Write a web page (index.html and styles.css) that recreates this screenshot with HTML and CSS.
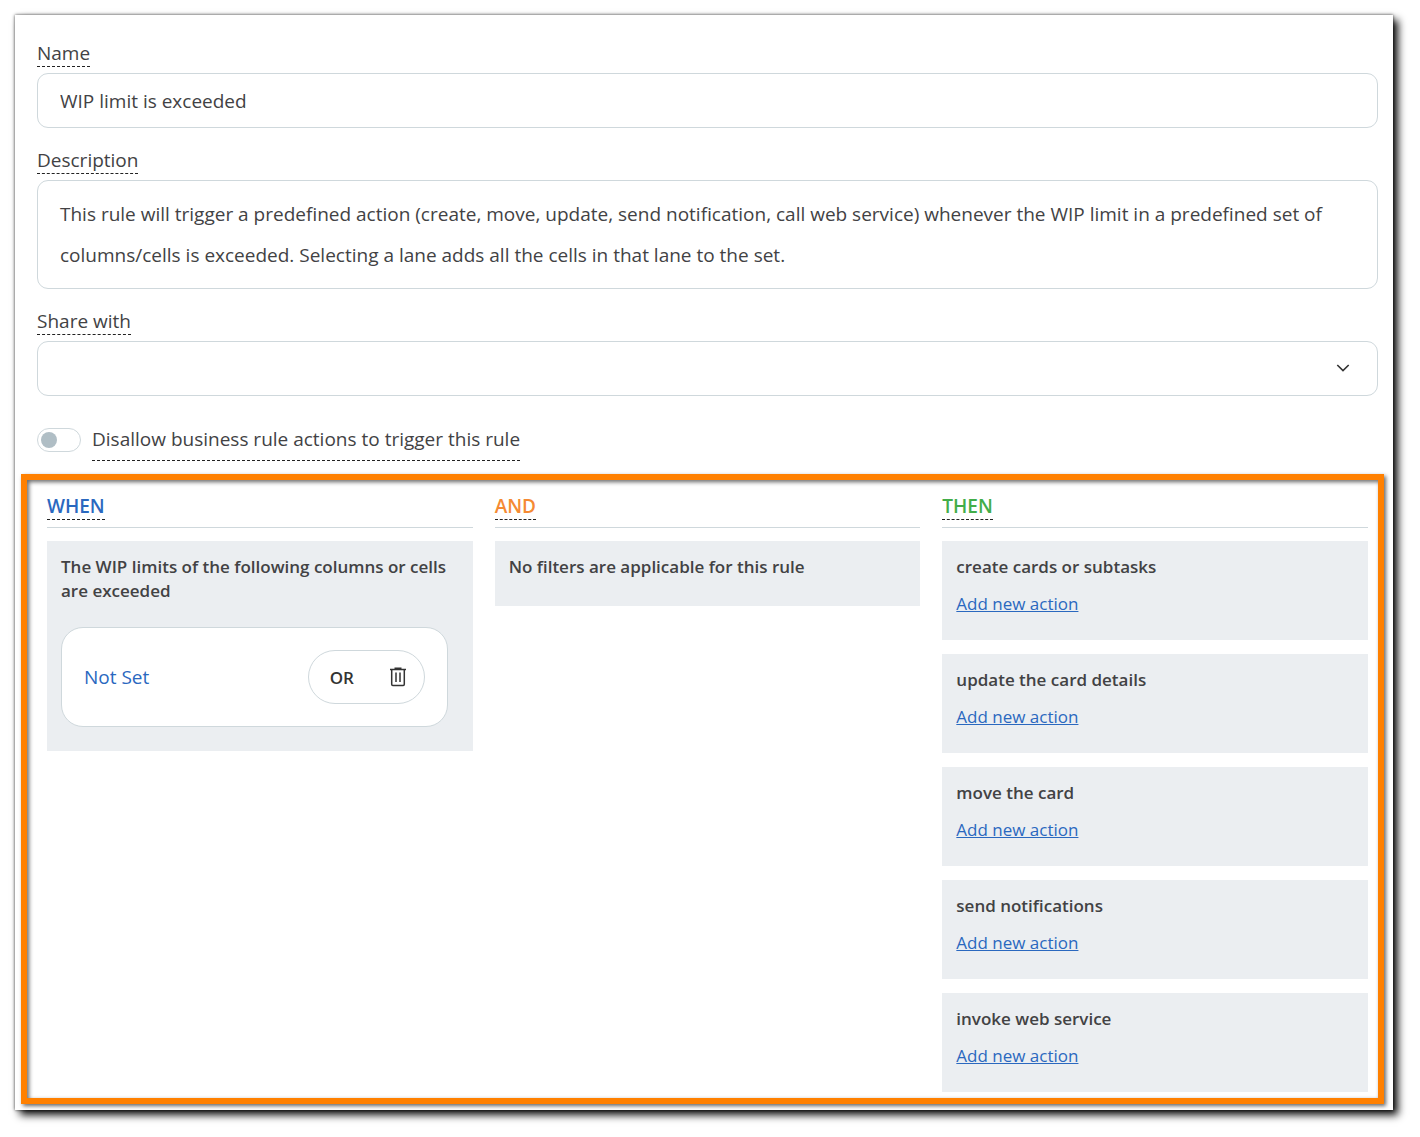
FILE: index.html
```html
<!DOCTYPE html>
<html lang="en">
<head>
<meta charset="utf-8">
<title>Business rule</title>
<link rel="stylesheet" href="styles.css">
</head>
<body>
<main class="panel">
  <form class="form">
    <div class="field">
      <label class="label" for="name">Name</label>
      <input class="control" id="name" type="text" value="WIP limit is exceeded">
    </div>
    <div class="field">
      <label class="label" for="description">Description</label>
      <textarea class="control control-area" id="description" rows="2">This rule will trigger a predefined action (create, move, update, send notification, call web service) whenever the WIP limit in a predefined set of columns/cells is exceeded. Selecting a lane adds all the cells in that lane to the set.</textarea>
    </div>
    <div class="field">
      <label class="label" for="share">Share with</label>
      <div class="select-wrap">
        <select class="control" id="share"><option></option></select>
        <svg class="chevron" width="14" height="8" viewBox="0 0 14 8" aria-hidden="true"><path d="M1.3 1 7 6.6 12.7 1" fill="none" stroke="currentColor" stroke-width="1.6"/></svg>
      </div>
    </div>
    <div class="toggle-row">
      <input class="toggle" id="disallow" type="checkbox">
      <label class="toggle-label" for="disallow">Disallow business rule actions to trigger this rule</label>
    </div>
  </form>
  <section class="rule">
    <div class="column">
      <div class="column-head"><h2 class="column-title when">WHEN</h2></div>
      <div class="block">
        <h3 class="block-title">The WIP limits of the following columns or cells are exceeded</h3>
        <div class="condition">
          <a class="condition-link" href="#">Not Set</a>
          <div class="pill">
            <button class="or" type="button">OR</button>
            <button class="trash" type="button" aria-label="Delete">
              <svg width="18" height="20" viewBox="0 0 18 20" fill="none" stroke="currentColor" stroke-width="1.5" aria-hidden="true"><path d="M1 2.5H17M5.5 1.2H12.5M2.7 2.5V17.3Q2.7 18.4 3.8 18.4H14.2Q15.3 18.4 15.3 17.3V2.5M7 5.5V15M11 5.5V15"/></svg>
            </button>
          </div>
        </div>
      </div>
    </div>
    <div class="column">
      <div class="column-head"><h2 class="column-title and">AND</h2></div>
      <div class="block"><h3 class="block-title">No filters are applicable for this rule</h3></div>
    </div>
    <div class="column">
      <div class="column-head"><h2 class="column-title then">THEN</h2></div>
      <div class="block"><h3 class="block-title">create cards or subtasks</h3><a class="action" href="#">Add new action</a></div>
      <div class="block"><h3 class="block-title">update the card details</h3><a class="action" href="#">Add new action</a></div>
      <div class="block"><h3 class="block-title">move the card</h3><a class="action" href="#">Add new action</a></div>
      <div class="block"><h3 class="block-title">send notifications</h3><a class="action" href="#">Add new action</a></div>
      <div class="block"><h3 class="block-title">invoke web service</h3><a class="action" href="#">Add new action</a></div>
    </div>
  </section>
</main>
</body>
</html>
```

FILE: styles.css
```css
* {
  box-sizing: border-box;
}

body {
  margin: 0;
  padding: 15px 27px 27px 15px;
  background: #fff;
  color: #424244;
  font-family: "Open Sans", "Noto Sans", sans-serif;
  font-size: 19px;
}

.panel {
  padding: 26px 9px 6px 6px;
  background: #fff;
  box-shadow: 0 0 3px rgba(0, 0, 0, 0.7), 5px 5px 8px rgba(0, 0, 0, 0.95);
}

.form {
  padding: 0 6px 0 16px;
}

.field {
  display: flex;
  flex-direction: column;
  align-items: flex-start;
  gap: 6px;
  margin-bottom: 20px;
}

.label {
  border-bottom: 1px dashed #222;
  line-height: 25px;
}

.control {
  display: block;
  width: 100%;
  height: 55px;
  padding: 0 22px;
  border: 1px solid #cfd8dc;
  border-radius: 11px;
  background: #fff;
  color: inherit;
  font: inherit;
  appearance: none;
}

.control-area {
  height: auto;
  padding: 13px 22px 12px;
  line-height: 41px;
  resize: none;
  overflow: hidden;
}

.select-wrap {
  position: relative;
  width: 100%;
}

.chevron {
  position: absolute;
  top: 23px;
  right: 28px;
  color: #333;
  pointer-events: none;
}

.toggle-row {
  display: flex;
  align-items: center;
  gap: 11px;
  margin: 22px 0 13px;
}

.toggle {
  display: flex;
  align-items: center;
  width: 44px;
  height: 24px;
  margin: 0;
  padding: 0 3px;
  border: 1px solid #cfd8dc;
  border-radius: 12px;
  appearance: none;
}

.toggle::before {
  content: "";
  width: 16px;
  height: 16px;
  border-radius: 50%;
  background: #b0bec5;
}

.toggle:checked {
  justify-content: flex-end;
}

.toggle-label {
  border-bottom: 1px dashed #222;
  line-height: 42px;
}

.rule {
  display: grid;
  grid-template-columns: repeat(3, minmax(0, 1fr));
  gap: 22px;
  padding: 14px 10px 6px 20px;
  border: 6px solid #ff8000;
  box-shadow: 2px 2px 4px rgba(0, 0, 0, 0.6), inset 2px 2px 4px rgba(0, 0, 0, 0.6);
}

.column {
  display: flex;
  flex-direction: column;
  gap: 14px;
}

.column-head {
  display: flex;
  height: 34px;
  margin-bottom: -1px;
  border-bottom: 1px solid #cfd8dc;
}

.column-title {
  align-self: flex-start;
  margin: 0;
  border-bottom: 1px dashed #222;
  font-size: 19px;
  font-weight: 600;
  line-height: 25px;
}

.when {
  color: #2a68bf;
}

.and {
  color: #f58a33;
}

.then {
  color: #42ad49;
}

.block {
  display: flex;
  flex-direction: column;
  align-items: flex-start;
  gap: 13px;
  min-height: 65px;
  padding: 14px 14px 24px;
  background: #ebeef1;
}

.block-title {
  margin: 0;
  font-size: 17px;
  font-weight: 600;
  line-height: 24px;
}

.action {
  color: #2a68bf;
  font-size: 17px;
  line-height: 24px;
}

.condition {
  display: flex;
  align-items: center;
  justify-content: space-between;
  align-self: stretch;
  height: 100px;
  margin: 11px 11px 0 0;
  padding: 0 22px;
  border: 1px solid #cfd8dc;
  border-radius: 22px;
  background: #fff;
}

.condition-link {
  color: #2a68bf;
  text-decoration: none;
}

.pill {
  display: flex;
  align-items: center;
  justify-content: space-between;
  width: 117px;
  height: 54px;
  padding: 0 17px 0 21px;
  border: 1px solid #cfd8dc;
  border-radius: 27px;
}

.or,
.trash {
  display: flex;
  padding: 0;
  border: 0;
  background: none;
  color: #333;
  font: 600 17px "Open Sans", "Noto Sans", sans-serif;
}
```
